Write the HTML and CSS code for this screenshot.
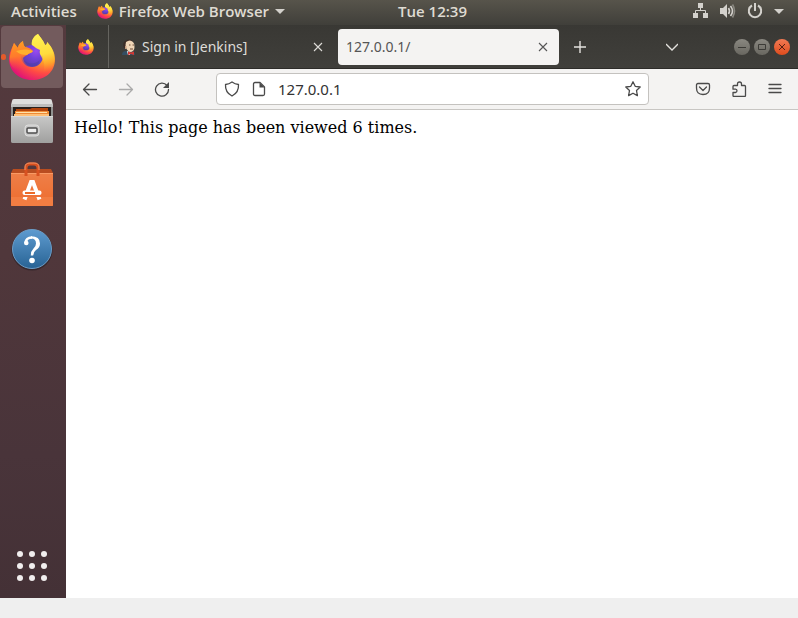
FILE: index.html
```html
<!DOCTYPE html>
<html lang="en">
<head>
<meta charset="utf-8">
<meta name="viewport" content="width=device-width, initial-scale=1">
<title>127.0.0.1/</title>
<link rel="stylesheet" href="styles.css">
</head>
<body>
<svg class="defs" aria-hidden="true">
  <defs>
    <radialGradient id="ff-body" cx="38" cy="6" r="46" gradientUnits="userSpaceOnUse">
      <stop offset="0" stop-color="#fff04a"/><stop offset=".3" stop-color="#ffca30"/><stop offset=".52" stop-color="#ff9a28"/><stop offset=".75" stop-color="#ff4a45"/><stop offset="1" stop-color="#e01278"/>
    </radialGradient>
    <linearGradient id="ff-flame" x1="30" y1="1" x2="40" y2="38" gradientUnits="userSpaceOnUse">
      <stop offset="0" stop-color="#fff453"/><stop offset=".55" stop-color="#ffdc3e"/><stop offset="1" stop-color="#ff9a28" stop-opacity="0"/>
    </linearGradient>
    <radialGradient id="ff-globe" cx="28" cy="18" r="16" gradientUnits="userSpaceOnUse">
      <stop offset="0" stop-color="#9a4bf0"/><stop offset=".5" stop-color="#7040d8"/><stop offset="1" stop-color="#5a3fb0"/>
    </radialGradient>
    <linearGradient id="ff-head" x1="8" y1="10" x2="12" y2="36" gradientUnits="userSpaceOnUse">
      <stop offset="0" stop-color="#ff9a22"/><stop offset=".5" stop-color="#ff7a2c"/><stop offset="1" stop-color="#ff4a45" stop-opacity="0"/>
    </linearGradient>
    <symbol id="firefox" viewBox="0 0 48 48">
      <path fill="url(#ff-body)" d="M30 1c2 3 5 6 7 11 2 0 2-2 2-3 5 5 8 11 8 17 0 13-10 21-23 21S1 38 1 26c0-6 3-11 5-16l4 5c0-3 2-5 5-7 0 3 1 5 2 6 3-1 5-1 7-1-1-5 2-10 6-12z"/>
      <circle cx="24" cy="23" r="11" fill="url(#ff-globe)"/>
      <path fill="#4b3fa5" opacity=".5" d="M16 27c3 4 11 5 16 0-2 6-6 7-10 6-3-1-5-3-6-6z"/>
      <path fill="url(#ff-flame)" d="M30 1c2 3 5 6 7 11 2 0 2-2 2-3 5 5 8 12 7 19-1 7-5 12-12 14 3-6 3-12 0-17-1-3-3-4-2-8-3-1-5-3-8-5-1-5 2-9 6-11z"/>
      <path fill="url(#ff-head)" d="M6 10l4 5c0-3 2-5 5-7 0 3 1 5 2 6 3 0 5 1 8 4-1 2-4 2-6 4-2 1-3 2-4 3 1 8 9 10 15 7C24 44 5 42 2 29c-1-7 2-13 4-19z"/>
      <path fill="#ffb02d" d="M8 18c6-2 12-2 17 0-1 2-4 2-6 4-4 0-8-1-11-4z"/>
    </symbol>
    <symbol id="cross" viewBox="0 0 10 10"><path d="M1 1l8 8M9 1L1 9" fill="none" stroke="currentColor" stroke-width="1.1"/></symbol>
  </defs>
</svg>

<header class="topbar">
  <button class="top-item" type="button">Activities</button>
  <button class="top-item app-menu" type="button"><svg class="i16"><use href="#firefox"/></svg>Firefox Web Browser<span class="caret"></span></button>
  <span class="space-one"></span>
  <time class="clock">Tue 12:39</time>
  <span class="space-two"></span>
  <button class="status" type="button" aria-label="System menu">
    <svg class="i16" viewBox="0 0 16 16"><path fill="#d3d1cc" d="M5 0h5v5H5zM0 10h5v5H0zM10 10h5v5h-5z"/><path fill="none" stroke="#d3d1cc" d="M7.500 5v3M2.500 10V7.500h10V10"/></svg>
    <svg class="i16" viewBox="0 0 16 16"><path fill="#d3d1cc" d="M0 5h3l4-4v14l-4-4H0z"/><path fill="none" stroke="#d3d1cc" stroke-width="1.600" d="M8.500 5q2 3 0 6M10.500 3q4 5 0 10"/><path fill="none" stroke="#8a8881" stroke-width="1.600" d="M12.500 1.500q4 6.500 0 13"/></svg>
    <svg class="i16" viewBox="0 0 16 16"><path fill="none" stroke="#d3d1cc" stroke-width="2" d="M5 2.500a6.200 6.200 0 1 0 6 0M8 0v8"/></svg>
    <span class="caret"></span>
  </button>
</header>

<div class="desktop">
  <nav class="dock" aria-label="Dock">
    <button class="launcher running" type="button" aria-label="Firefox"><svg class="i48"><use href="#firefox"/></svg></button>
    <button class="launcher" type="button" aria-label="Files">
      <svg class="i48" viewBox="0 0 48 48">
        <defs><linearGradient id="metal" x2="0" y2="1"><stop stop-color="#c8c8c7"/><stop offset="1" stop-color="#a0a09f"/></linearGradient></defs>
        <path fill="#929291" d="M3 7h42v37q0 2-2 2H5q-2 0-2-2z"/>
        <path fill="#dededd" d="M6 2h36q2 0 2 2l1 4H3l1-4q0-2 2-2z"/><path fill="#bebebd" d="M3 7h42v3H3z"/>
        <path fill="#28201d" d="M5 10h38v11H5z"/><path fill="#b4450c" d="M8 12h14l2-1h16v9H8z"/><path fill="#ee8a35" d="M7 14h34v6H7z"/><path fill="#ffe0aa" d="M8 15h31v1H8z"/><path fill="#ffc078" d="M6 17h35v4H6z"/>
        <path fill="url(#metal)" d="M4 19h40q1 0 1 1v24q0 2-2 2H5q-2 0-2-2V20q0-1 1-1z"/><path stroke="#d8d8d7" d="M3 19.500h42"/>
        <rect x="17" y="28" width="14" height="11" rx="3" fill="#c8c8c8" stroke="#dededd"/><rect x="19" y="31" width="10" height="5" rx="1" fill="#eee" stroke="#4e4e4e" stroke-width="1.500"/>
      </svg>
    </button>
    <button class="launcher" type="button" aria-label="Ubuntu Software">
      <svg class="i48" viewBox="0 0 48 48">
        <defs><linearGradient id="bag" x2="0" y2="1"><stop stop-color="#ee7f48"/><stop offset="1" stop-color="#ee6c2e"/></linearGradient></defs>
        <path fill="#b94d20" d="M5 8h38l2 4v4H3v-4z"/><path fill="url(#bag)" d="M3 12h42v32q0 1-1 1H4q-1 0-1-1z"/><path fill="#f27d42" d="M3 36h42v8q0 1-1 1H4q-1 0-1-1z"/><path stroke="#f99a65" d="M3 12.500h42"/>
        <path fill="none" stroke="#d85120" stroke-width="3" d="M18 15V7q0-4 4-4h4q4 0 4 4v8"/><path fill="none" stroke="#f29365" d="M17 9V6q0-4 5-4h4q5 0 5 4v3"/>
        <path fill="none" stroke="#fff" stroke-width="4" d="M16.500 38.500L23 21h2l6.500 17.500"/><path stroke="#ed7138" stroke-width="2" d="M14 35h20"/><rect x="14.500" y="29.500" width="19" height="4.500" rx="2" fill="#fff"/><path stroke="#ed6b29" stroke-width="2" d="M17 32h10"/>
      </svg>
    </button>
    <button class="launcher" type="button" aria-label="Help">
      <svg class="i48" viewBox="0 0 48 48">
        <defs><linearGradient id="help" x2="0" y2="1"><stop stop-color="#5e9bd0"/><stop offset="1" stop-color="#286394"/></linearGradient></defs>
        <circle cx="24" cy="25" r="20.500" fill="#38282c"/><circle cx="24" cy="24" r="19.500" fill="url(#help)" stroke="#6c9cc6"/>
        <path fill="none" stroke="#fff" stroke-width="2.500" d="M17.500 18q.5-5.500 6.500-5.500"/><path fill="#fff" d="M23 11.300q9 0 9 7.200 0 4-4 6.500-2.800 2-2.800 5.500h-2.400q0-4.500 2.700-7 2.500-2.200 2.500-5 0-5-5-5z"/><circle cx="18.300" cy="18" r="2.300" fill="#fff"/><circle cx="24" cy="35.500" r="2.800" fill="#fff"/>
      </svg>
    </button>
    <button class="launcher apps" type="button" aria-label="Show Applications">
      <svg class="i48" viewBox="0 0 48 48" fill="#f1eeee"><circle cx="12" cy="12" r="3"/><circle cx="24" cy="12" r="3"/><circle cx="36" cy="12" r="3"/><circle cx="12" cy="24" r="3"/><circle cx="24" cy="24" r="3"/><circle cx="36" cy="24" r="3"/><circle cx="12" cy="36" r="3"/><circle cx="24" cy="36" r="3"/><circle cx="36" cy="36" r="3"/></svg>
    </button>
  </nav>

  <div class="browser">
    <div class="tabs">
      <button class="pinned" type="button" aria-label="Firefox tab"><svg class="i16"><use href="#firefox"/></svg></button>
      <div class="tab">
        <svg class="i16" viewBox="0 0 16 16"><path fill="#344e62" d="M1 16q0-4 4-4h6q3 1 3 4z"/><path fill="#3c2c26" d="M3 9Q1 4 4 2q4-3 8 0L7 4 5 9z"/><path fill="#f0d6b7" d="M5 3q4-3 7 0 2 2 1.500 5 0 4-3.500 5-3 0-5-4Q4 6 5 3z"/><path fill="#c99d80" d="M4 7h1.500v3H4z"/><path fill="none" stroke="#6c4837" d="M8 6h1.500M11.500 6H13M9 10h3"/><path fill="#fff" d="M6 12l3 1v3H7z"/><path fill="#d33833" d="M7 12.500l3 1 3-1V16l-3-1-3 1z"/></svg>
        <button class="tab-name" type="button">Sign in [Jenkins]</button>
        <button class="close" type="button" aria-label="Close tab"><svg class="i10"><use href="#cross"/></svg></button>
      </div>
      <div class="tab active">
        <button class="tab-name" type="button">127.0.0.1/</button>
        <button class="close" type="button" aria-label="Close tab"><svg class="i10"><use href="#cross"/></svg></button>
      </div>
      <button class="new-tab" type="button" aria-label="New tab"><svg class="i12" viewBox="0 0 12 12"><path stroke="#e4e2de" stroke-width="1.400" d="M6 0v12M0 6h12"/></svg></button>
      <button class="all-tabs" type="button" aria-label="List all tabs"><svg class="i12" viewBox="0 0 12 12"><path fill="none" stroke="#e4e2de" stroke-width="1.300" d="M0 3l6 6 6-6"/></svg></button>
      <div class="window-buttons">
        <button type="button" aria-label="Minimize"><svg class="i16" viewBox="0 0 16 16"><path stroke="#3c3b37" d="M4 8.500h8"/></svg></button>
        <button type="button" aria-label="Maximize"><svg class="i16" viewBox="0 0 16 16"><path fill="none" stroke="#3c3b37" d="M4.500 5.500h7v5h-7z"/></svg></button>
        <button class="quit" type="button" aria-label="Close"><svg class="i16" viewBox="0 0 16 16"><path stroke="#552013" d="M5 5l6 6M11 5l-6 6"/></svg></button>
      </div>
    </div>

    <div class="toolbar">
      <div class="nav-buttons">
        <button type="button" aria-label="Back"><svg class="i16" viewBox="0 0 16 16"><path class="line" d="M14.500 8.500H1.500M7 3L1.500 8.500 7 14"/></svg></button>
        <button type="button" aria-label="Forward" disabled><svg class="i16" viewBox="0 0 16 16"><path class="line" d="M1.500 8.500h13M9 3l5.500 5.500L9 14"/></svg></button>
        <button type="button" aria-label="Reload"><svg class="i16" viewBox="0 0 16 16"><path class="line" d="M13 4.500A6.500 6.500 0 1 0 14.500 8.500"/><path fill="#4a4a4a" d="M15 1v6H9z"/></svg></button>
      </div>
      <form class="address">
        <svg class="i16" viewBox="0 0 16 16"><path class="line" d="M8 1q3 2.200 6.500 2.500.5 8-6.500 11.500Q1 11.500 1.500 3.500 5 3.200 8 1z"/></svg>
        <svg class="i16" viewBox="0 0 16 16"><path class="line" d="M4 1.500h5l4.500 4.500v7q0 1.500-1.500 1.500H4q-1.500 0-1.500-1.500V3q0-1.500 1.500-1.500z"/><path fill="#4a4a4a" d="M8.500 1.500L13.500 6.500h-5z"/></svg>
        <input type="text" value="127.0.0.1" aria-label="Address">
        <button type="button" aria-label="Bookmark this page"><svg class="i16" viewBox="0 0 16 16"><path class="line" d="M8 .8l2.200 4.500 5 .7-3.700 3.500.9 5.100L8 12.200l-4.400 2.400.9-5.100L.8 6l5-.7z"/></svg></button>
      </form>
      <div class="tools">
        <button type="button" aria-label="Save to Pocket"><svg class="i16" viewBox="0 0 16 16"><path class="line" d="M3 2.500h10q1.500 0 1.500 1.500v3q0 6.500-6.500 6.500T1.500 7V4q0-1.500 1.500-1.500zM4.500 6L8 9.500 11.500 6"/></svg></button>
        <button type="button" aria-label="Extensions"><svg class="i16" viewBox="0 0 16 16"><path class="line" d="M6.500 4.500V3q0-2 2-2t2 2v1.500h3q1 0 1 1v9q0 1-1 1H3q-1 0-1-1v-3h2.500q1.500-.2 1.500-1.700T4.500 8.200H2V5.500q0-1 1-1z"/></svg></button>
        <button type="button" aria-label="Menu"><svg class="i16" viewBox="0 0 16 16"><path class="line" d="M2 3.500h12M2 7.500h12M2 11.500h12"/></svg></button>
      </div>
    </div>
    <main class="page">Hello! This page has been viewed 6 times.</main>
  </div>
</div>
<footer class="strip"></footer>
</body>
</html>
```

FILE: styles.css
```css
* { box-sizing: border-box; }
body {
  margin: 0;
  min-height: 100vh;
  display: flex;
  flex-direction: column;
  font: 14px/20px "Noto Sans", "Open Sans", sans-serif;
  background: #efefef;
}
button {
  margin: 0;
  padding: 0;
  border: 0;
  background: none;
  color: inherit;
  font: inherit;
  display: flex;
  align-items: center;
  justify-content: center;
}
svg { display: block; flex: none; }
.defs { position: absolute; width: 0; height: 0; }
.i10 { width: 10px; height: 10px; }
.i12 { width: 12px; height: 12px; }
.i16 { width: 16px; height: 16px; }
.i48 { width: 48px; height: 48px; }
.line { fill: none; stroke: currentColor; stroke-width: 1.3; stroke-linejoin: round; stroke-linecap: round; }

.topbar {
  height: 25px;
  padding: 0 14px 3px 11px;
  display: flex;
  align-items: center;
  color: #dfdbd2;
  font: 600 15px/20px "Open Sans", "Noto Sans", sans-serif;
  white-space: nowrap;
  background: linear-gradient(#57544b, #403f3a);
}
.app-menu { margin-left: 20px; gap: 6px; }
.space-one { flex: 1; }
.space-two { flex: 2; }
.status { gap: 11px; }
.caret {
  border: 5px solid transparent;
  border-top-color: #d3d1cc;
  border-bottom: 0;
}

.desktop { flex: 1; display: flex; }
.dock {
  width: 66px;
  display: flex;
  flex-direction: column;
  align-items: flex-start;
  padding: 1px 0 1px 1px;
  gap: 2px;
  background: linear-gradient(#543a3e, #50373b 40%, #49343a 75%, #443136);
}
.launcher { width: 62px; height: 62px; border-radius: 4px; }
.running { background: #735b5d; position: relative; }
.running::before {
  content: "";
  position: absolute;
  left: 0;
  width: 5px;
  height: 6px;
  border-radius: 3px;
  background: #e55b2b;
}
.apps { margin-top: auto; }

.browser { flex: 1; min-width: 0; display: flex; flex-direction: column; background: #fff; }
.tabs {
  height: 44px;
  display: flex;
  align-items: center;
  padding-right: 8px;
  color: #dedcd8;
  background: linear-gradient(#393834, #403f3b);
  border-bottom: 1px solid #2d2c29;
}
.pinned { width: 43px; align-self: stretch; padding-right: 2px; border-right: 1px solid #65645f; }
.tab {
  flex: 0 1 221px;
  height: 36px;
  margin-right: 4px;
  padding: 0 11px 0 8px;
  display: flex;
  align-items: center;
  border-radius: 4px;
}
.tab:not(.active) { flex-basis: 225px; padding-left: 12px; gap: 5px; }
.tab-name { flex: 1; justify-content: flex-start; white-space: nowrap; }
.active { background: #f4f3f2; color: #555; }
.new-tab { width: 34px; height: 34px; }
.all-tabs { width: 34px; height: 34px; margin-left: auto; }
.window-buttons { display: flex; gap: 4px; margin-left: 45px; }
.window-buttons button { border-radius: 8px; background: linear-gradient(#8a8881, #696760); }
.window-buttons .quit { background: linear-gradient(#f27a54, #df4c1d); }

.toolbar {
  height: 41px;
  padding: 0 15px 0 16px;
  display: flex;
  align-items: center;
  color: #4a4a4a;
  background: #f4f3f2;
  border-bottom: 1px solid #c8c6c3;
}
.nav-buttons { display: flex; gap: 20px; }
.nav-buttons :disabled { color: #aaa; }
.address {
  flex: 1;
  min-width: 0;
  height: 32px;
  margin: 0 46px;
  padding: 0 7px;
  display: flex;
  align-items: center;
  gap: 11px;
  background: #fff;
  border: 1px solid #c4c2bf;
  border-radius: 4px;
}
.address input {
  flex: 1;
  min-width: 0;
  margin: 0;
  padding: 0;
  border: 0;
  outline: 0;
  background: none;
  color: #333;
  font: 15px/20px "Noto Sans", "Open Sans", sans-serif;
}
.tools { display: flex; gap: 20px; }
.page { flex: 1; padding: 8px; color: #000; font: 16px/19px "DejaVu Serif", serif; }
.strip { height: 20px; background: #efefef; }
```
